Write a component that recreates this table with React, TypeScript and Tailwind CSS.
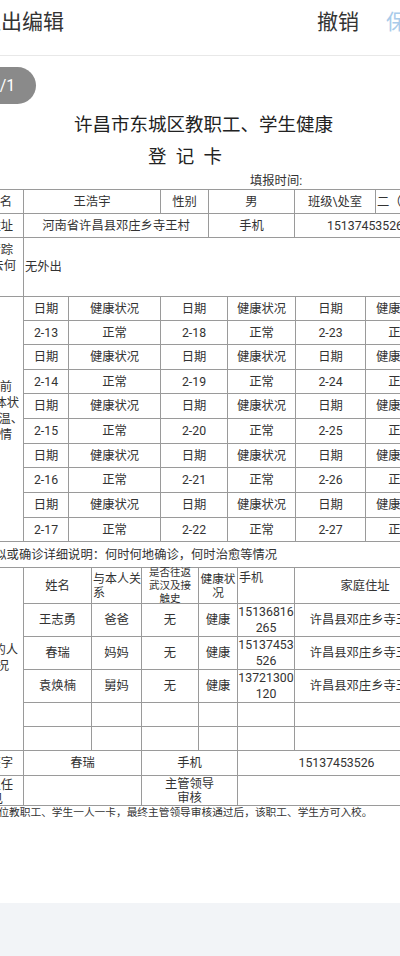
import React from "react";

type N = React.ReactNode;

function Cell({ w, children, start = false, cls = "" }: { w: string; children?: N; start?: boolean; cls?: string }) {
  return (
    <div
      className={`${w} h-full shrink-0 border-r border-[#9a9a9a] flex items-center whitespace-nowrap ${
        start ? "justify-start" : "justify-center text-center"
      } ${cls}`}
    >
      {children}
    </div>
  );
}

function Row({ h, children }: { h: string; children: N }) {
  return <div className={`${h} flex border-b border-[#9a9a9a]`}>{children}</div>;
}

function Lbl({ lines, cls = "" }: { lines: { t: string; pr: string }[]; cls?: string }) {
  return (
    <div className={`w-[24px] h-full shrink-0 border-r border-[#9a9a9a] flex flex-col items-end leading-[16px] whitespace-nowrap ${cls}`}>
      {lines.map((l, i) => (
        <div key={i} className={l.pr}>
          {l.t}
        </div>
      ))}
    </div>
  );
}

const hHeights = [
  "h-[24px]",
  "h-[24px]",
  "h-[25px]",
  "h-[24px]",
  "h-[25px]",
  "h-[25px]",
  "h-[24px]",
  "h-[25px]",
  "h-[25px]",
  "h-[24px]",
];

const dates = [
  ["2-13", "2-18", "2-23"],
  ["2-14", "2-19", "2-24"],
  ["2-15", "2-20", "2-25"],
  ["2-16", "2-21", "2-26"],
  ["2-17", "2-22", "2-27"],
];

const family = [
  { name: "王志勇", rel: "爸爸", ph: ["15136816", "265"] },
  { name: "春瑞", rel: "妈妈", ph: ["15137453", "526"] },
  { name: "袁焕楠", rel: "舅妈", ph: ["13721300", "120"] },
];

export default function App() {
  return (
    <div className="w-[400px] h-[956px] overflow-hidden relative bg-white flex flex-col text-[#333] font-[family-name:Roboto,'Noto_Sans_CJK_SC',sans-serif]">
      <header className="h-[56px] shrink-0 border-b border-[#e8e8e8] flex items-start pt-[8px]">
        <span className="ml-[-20px] text-[21px] leading-[28px] text-[#333] whitespace-nowrap">退出编辑</span>
        <div className="ml-auto mr-[-28px] flex gap-[27px] text-[21px] leading-[28px] whitespace-nowrap">
          <span className="text-[#333]">撤销</span>
          <span className="text-[#a9cbea]">保存</span>
        </div>
      </header>

      <main className="flex-1 relative pt-[56px]">
        <div className="absolute top-[11px] left-[-30px] w-[66px] h-[37px] rounded-full bg-[#8a8a8a] text-white text-[16px] leading-[37px] text-center">
          1/1
        </div>

        <div className="text-[18.5px] leading-[26px] text-center pl-[7px] text-[#222] whitespace-nowrap">
          许昌市东城区教职工、学生健康
        </div>
        <div className="mt-[6px] text-[18.5px] leading-[26px] text-center pr-[30px] text-[#222] whitespace-pre">
          登  记  卡
        </div>
        <div className="mt-[3px] pl-[250px] text-[12.3px] leading-[16px] whitespace-nowrap">填报时间:</div>

        <div className="w-[436px] border-t border-[#9a9a9a] text-[12.3px] leading-[16px]">
          <Row h="h-[24px]">
            <Lbl cls="justify-center" lines={[{ t: "姓名", pr: "pr-[11px]" }]} />
            <Cell w="w-[137px]">王浩宇</Cell>
            <Cell w="w-[48px]">性别</Cell>
            <Cell w="w-[86px]">男</Cell>
            <Cell w="w-[81px]">班级\处室</Cell>
            <Cell w="w-[60px]" start cls="pl-[1px]">
              二（3）班
            </Cell>
          </Row>
          <Row h="h-[24px]">
            <Lbl cls="justify-center" lines={[{ t: "住址", pr: "pr-[10px]" }]} />
            <Cell w="w-[185px]">河南省许昌县邓庄乡寺王村</Cell>
            <Cell w="w-[86px]">手机</Cell>
            <Cell w="w-[141px]">15137453526</Cell>
          </Row>
          <Row h="h-[59px]">
            <Lbl
              cls="pt-[4px]"
              lines={[
                { t: "近期行踪", pr: "pr-[10px]" },
                { t: "外出去何", pr: "pr-[7px]" },
              ]}
            />
            <Cell w="w-[412px]" start cls="pl-[1px]">
              无外出
            </Cell>
          </Row>

          <div className="flex">
            <div className="border-b border-[#9a9a9a] flex">
              <Lbl
                cls="pt-[82px]"
                lines={[
                  { t: "返校前", pr: "pr-[11px]" },
                  { t: "身体状", pr: "pr-[4px]" },
                  { t: "况、体温、", pr: "pr-[0px]" },
                  { t: "病情", pr: "pr-[11px]" },
                ]}
              />
            </div>
            <div className="flex-1 flex flex-col">
              {hHeights.map((h, i) => {
                const head = i % 2 === 0;
                const d = dates[Math.floor(i / 2)];
                return (
                  <Row h={h} key={i}>
                    <Cell w="w-[45px]">{head ? "日期" : d[0]}</Cell>
                    <Cell w="w-[92px]">{head ? "健康状况" : "正常"}</Cell>
                    <Cell w="w-[67px]">{head ? "日期" : d[1]}</Cell>
                    <Cell w="w-[68px]">{head ? "健康状况" : "正常"}</Cell>
                    <Cell w="w-[70px]">{head ? "日期" : d[2]}</Cell>
                    <Cell w="w-[70px]">{head ? "健康状况" : "正常"}</Cell>
                  </Row>
                );
              })}
            </div>
          </div>

          <Row h="h-[26px]">
            <div className="flex items-center whitespace-nowrap ml-[-18px]">
              疑似或确诊详细说明：何时何地确诊，何时治愈等情况
            </div>
          </Row>

          <div className="flex">
            <div className="border-b border-[#9a9a9a] flex">
              <Lbl
                cls="pt-[74px]"
                lines={[
                  { t: "同住的人", pr: "pr-[5px]" },
                  { t: "员情况", pr: "pr-[14px]" },
                ]}
              />
            </div>
            <div className="flex-1 flex flex-col">
              <Row h="h-[36px]">
                <Cell w="w-[68px]">姓名</Cell>
                <Cell w="w-[50px]" start cls="pl-[1px]">
                  <div className="leading-[14px] text-[12px] text-left">
                    与本人关
                    <br />系
                  </div>
                </Cell>
                <Cell w="w-[57px]">
                  <div className="leading-[13px] text-[10.5px]">
                    是否往返
                    <br />
                    武汉及接
                    <br />
                    触史
                  </div>
                </Cell>
                <Cell w="w-[39px]">
                  <div className="leading-[14px] text-[11.7px]">
                    健康状
                    <br />况
                  </div>
                </Cell>
                <Cell w="w-[57px]" start cls="!items-start pl-[1px] pt-[2px]">
                  <span className="text-[12px]">手机</span>
                </Cell>
                <Cell w="w-[141px]">家庭住址</Cell>
              </Row>
              {family.map((f, i) => (
                <Row h="h-[33px]" key={i}>
                  <Cell w="w-[68px]">{f.name}</Cell>
                  <Cell w="w-[50px]">{f.rel}</Cell>
                  <Cell w="w-[57px]">无</Cell>
                  <Cell w="w-[39px]">健康</Cell>
                  <Cell w="w-[57px]">
                    <div className="leading-[16px]">
                      {f.ph[0]}
                      <br />
                      {f.ph[1]}
                    </div>
                  </Cell>
                  <Cell w="w-[141px]">许昌县邓庄乡寺王村</Cell>
                </Row>
              ))}
              {[0, 1].map((i) => (
                <Row h="h-[24px]" key={i}>
                  <Cell w="w-[68px]" />
                  <Cell w="w-[50px]" />
                  <Cell w="w-[57px]" />
                  <Cell w="w-[39px]" />
                  <Cell w="w-[57px]" />
                  <Cell w="w-[141px]" />
                </Row>
              ))}
            </div>
          </div>

          <Row h="h-[25px]">
            <Lbl cls="justify-center" lines={[{ t: "签字", pr: "pr-[10px]" }]} />
            <Cell w="w-[118px]">春瑞</Cell>
            <Cell w="w-[96px]">手机</Cell>
            <Cell w="w-[198px]">15137453526</Cell>
          </Row>
          <Row h="h-[30px]">
            <Lbl
              cls="pt-[1px] leading-[14px]"
              lines={[
                { t: "班主任", pr: "pr-[10px] leading-[16px]" },
                { t: "意见", pr: "pr-[20px] leading-[13px]" },
              ]}
            />
            <Cell w="w-[118px]" />
            <Cell w="w-[96px]">
              <div className="leading-[14px]">
                主管领导
                <br />
                审核
              </div>
            </Cell>
            <Cell w="w-[198px]" />
          </Row>
        </div>

        <div className="ml-[-23px] text-[10.7px] leading-[14px] whitespace-nowrap">
          每单位教职工、学生一人一卡，最终主管领导审核通过后，该职工、学生方可入校。
        </div>
      </main>

      <div className="h-[53px] shrink-0 bg-[#f2f4f7]" />
    </div>
  );
}
